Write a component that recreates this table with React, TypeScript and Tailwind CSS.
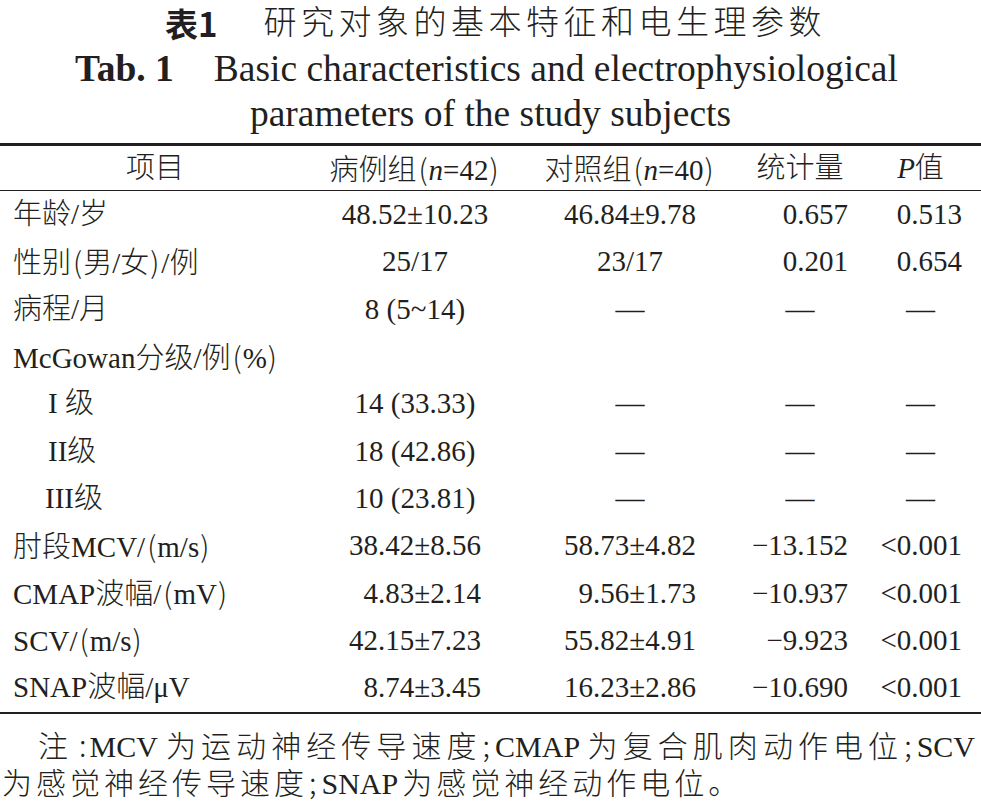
import React from 'react';

const serif = "font-['Liberation_Serif','Noto_Sans_CJK_SC',serif]";
const cjk = "font-['Noto_Sans_CJK_SC',sans-serif]";

// narrow brackets and punctuation, as typeset in the journal
const L = () => <span className={`${cjk} pl-[2px] pr-[1px]`}>(</span>;
const R = () => <span className={`${cjk} pl-[1px] pr-[2px]`}>)</span>;
const Semi = () => <span className={`${cjk} pl-[1px] pr-[5px]`}>;</span>;
const Colon = () => <span className={`${cjk} pl-[6px] pr-[3px]`}>:</span>;

type Row = {
  label: React.ReactNode;
  c2?: React.ReactNode;
  c3?: React.ReactNode;
  c4?: string;
  c5?: string;
};

const pad = <span className="invisible">0</span>;

const rows: Row[] = [
  { label: '年龄/岁', c2: '48.52±10.23', c3: '46.84±9.78', c4: '0.657', c5: '0.513' },
  { label: <>性别<L />男/女<R />/例</>, c2: '25/17', c3: '23/17', c4: '0.201', c5: '0.654' },
  { label: '病程/月', c2: '8 (5~14)', c3: '—', c4: '—', c5: '—' },
  { label: <>McGowan分级/例<L />%<R /></> },
  { label: <span className="pl-[35px]">I&nbsp;级</span>, c2: '14 (33.33)', c3: '—', c4: '—', c5: '—' },
  { label: <span className="pl-[35px]">II级</span>, c2: '18 (42.86)', c3: '—', c4: '—', c5: '—' },
  { label: <span className="pl-[32px]">III级</span>, c2: '10 (23.81)', c3: '—', c4: '—', c5: '—' },
  { label: <>肘段MCV/<L />m/s<R /></>, c2: '38.42±8.56', c3: '58.73±4.82', c4: '−13.152', c5: '<0.001' },
  { label: <>CMAP波幅/<L />mV<R /></>, c2: <>{pad}4.83±2.14</>, c3: <>{pad}9.56±1.73</>, c4: '−10.937', c5: '<0.001' },
  { label: <>SCV/<L />m/s<R /></>, c2: '42.15±7.23', c3: '55.82±4.91', c4: '−9.923', c5: '<0.001' },
  { label: 'SNAP波幅/μV', c2: <>{pad}8.74±3.45</>, c3: '16.23±2.86', c4: '−10.690', c5: '<0.001' },
];

const cols = 'grid grid-cols-[310px_210px_220px_120px_121px] items-center';

function NumCell({ value, pr }: { value?: string; pr: string }) {
  if (!value) return <div />;
  if (value === '—') return <div className="text-center">—</div>;
  return <div className={`text-right ${pr}`}>{value}</div>;
}

export default function App() {
  return (
    <div className={`w-[981px] h-[802px] bg-white overflow-hidden text-[#231f20] ${serif}`}>
      {/* Caption */}
      <div className="h-[143px] flex flex-col items-center">
        <div className="h-[48px] pl-[10px] flex items-center text-[33px] leading-normal">
          <span className={`${cjk} font-bold`}>表1</span>
          <span className="ml-[46px] font-light tracking-[4.5px]">研究对象的基本特征和电生理参数</span>
        </div>
        <div className="h-[43px] pr-[8px] flex items-center text-[37.5px] leading-normal">
          <span className="font-bold">Tab. 1</span>
          <span className="ml-[40px]">Basic characteristics and electrophysiological</span>
        </div>
        <div className="h-[47px] flex items-center text-[37.5px] leading-normal">
          parameters of the study subjects
        </div>
      </div>

      {/* Table */}
      <div className="h-[2.5px] bg-[#231f20]" />
      <div className={`${cols} h-[44.5px] text-[29px] leading-normal font-light`}>
        <div className="text-center">项目</div>
        <div className="text-center whitespace-nowrap">病例组<L /><i>n</i>=42<R /></div>
        <div className="text-center whitespace-nowrap">对照组<L /><i>n</i>=40<R /></div>
        <div className="text-center">统计量</div>
        <div className="text-center"><i>P</i>值</div>
      </div>
      <div className="h-[1.3px] bg-[#231f20]" />
      <div className="text-[29px] leading-normal font-light">
        {rows.map((r, i) => (
          <div key={i} className={`${cols} h-[47.3px]`}>
            <div className="pl-[13px] whitespace-nowrap">{r.label}</div>
            <div className="text-center whitespace-nowrap">{r.c2}</div>
            <div className="text-center whitespace-nowrap">{r.c3}</div>
            <NumCell value={r.c4} pr="pr-[12px]" />
            <NumCell value={r.c5} pr="pr-[19px]" />
          </div>
        ))}
      </div>
      <div className="h-[2.5px] bg-[#231f20]" />

      {/* Note */}
      <div className="mt-[13px] text-[30px] leading-[35px] font-light">
        <div className="pl-[38px] pr-[6px] text-justify [text-align-last:justify] whitespace-nowrap">
          <span className="tracking-[4px]">注</span><Colon />MCV <span className="tracking-[4px]">为运动神经传导速度</span><Semi />CMAP <span className="tracking-[4px]">为复合肌肉动作电位</span><Semi />SCV
        </div>
        <div className="pl-[2px] whitespace-nowrap">
          <span className="tracking-[4px]">为感觉神经传导速度</span><Semi />SNAP<span className="ml-[4px] tracking-[4px]">为感觉神经动作电位。</span>
        </div>
      </div>
    </div>
  );
}
